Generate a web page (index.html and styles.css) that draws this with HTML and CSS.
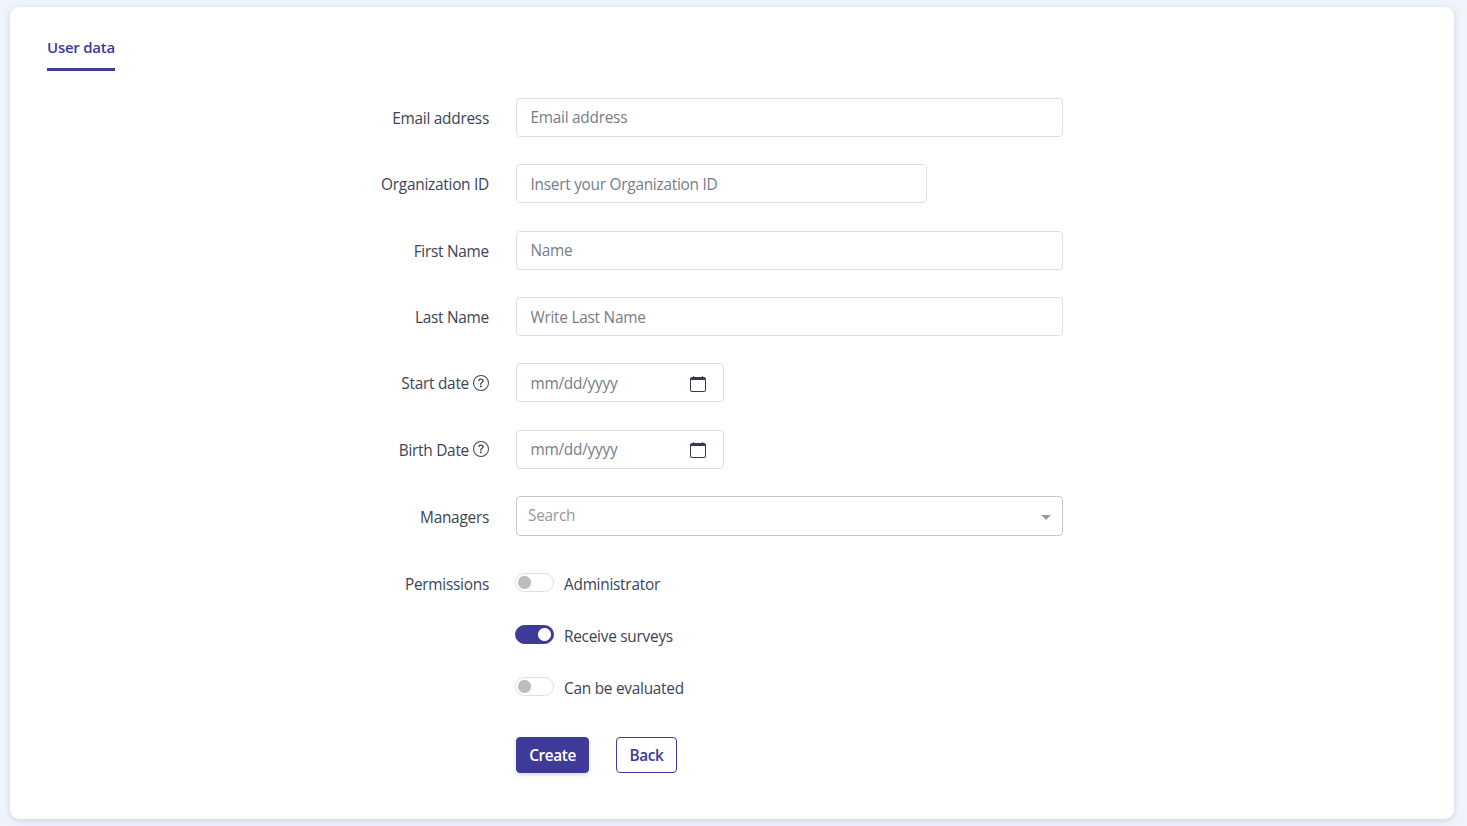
FILE: index.html
```html
<!DOCTYPE html>
<html lang="en">
<head>
  <meta charset="UTF-8">
  <meta name="viewport" content="width=device-width, initial-scale=1.0">
  <title>User data</title>
  <link rel="stylesheet" href="styles.css">
</head>
<body>
  <!-- Shared icons -->
  <svg class="sprite" aria-hidden="true">
    <symbol id="question" viewBox="0 0 16 16">
      <path d="M8 15A7 7 0 1 1 8 1a7 7 0 0 1 0 14zm0 1A8 8 0 1 0 8 0a8 8 0 0 0 0 16z"/>
      <path d="M5.255 5.786a.237.237 0 0 0 .241.247h.825c.138 0 .248-.113.266-.25.09-.656.54-1.134 1.342-1.134.686 0 1.314.343 1.314 1.168 0 .635-.374.927-.965 1.371-.673.489-1.206 1.06-1.168 1.987l.003.217a.25.25 0 0 0 .25.246h.811a.25.25 0 0 0 .25-.25v-.105c0-.718.273-.927 1.01-1.486.609-.463 1.244-.977 1.244-2.056 0-1.511-1.276-2.241-2.673-2.241-1.267 0-2.655.59-2.75 2.286zm1.557 5.763c0 .533.425.927 1.01.927.609 0 1.028-.394 1.028-.927 0-.552-.42-.94-1.029-.94-.584 0-1.009.388-1.009.94z"/>
    </symbol>
    <symbol id="calendar" viewBox="0 0 16 16">
      <path d="M3.5 0a.5.5 0 0 1 .5.5V1h8V.5a.5.5 0 0 1 1 0V1h1a2 2 0 0 1 2 2v11a2 2 0 0 1-2 2H2a2 2 0 0 1-2-2V3a2 2 0 0 1 2-2h1V.5a.5.5 0 0 1 .5-.5zM1 4v10a1 1 0 0 0 1 1h12a1 1 0 0 0 1-1V4H1z"/>
    </symbol>
  </svg>

  <div class="card">
    <div class="tabs">
      <a class="tab">User data</a>
    </div>

    <form class="user-form">
      <div class="form-row">
        <label for="email">Email address</label>
        <input class="form-control" id="email" type="text" placeholder="Email address">
      </div>
      <div class="form-row">
        <label for="organization">Organization ID</label>
        <input class="form-control medium" id="organization" type="text" placeholder="Insert your Organization ID">
      </div>
      <div class="form-row">
        <label for="firstName">First Name</label>
        <input class="form-control" id="firstName" type="text" placeholder="Name">
      </div>
      <div class="form-row">
        <label for="lastName">Last Name</label>
        <input class="form-control" id="lastName" type="text" placeholder="Write Last Name">
      </div>
      <div class="form-row">
        <label for="startDate">Start date <svg class="help"><use href="#question"/></svg></label>
        <div class="form-control date">
          <input id="startDate" type="text" placeholder="mm/dd/yyyy">
          <svg class="calendar"><use href="#calendar"/></svg>
        </div>
      </div>
      <div class="form-row">
        <label for="birthDate">Birth Date <svg class="help"><use href="#question"/></svg></label>
        <div class="form-control date">
          <input id="birthDate" type="text" placeholder="mm/dd/yyyy">
          <svg class="calendar"><use href="#calendar"/></svg>
        </div>
      </div>
      <div class="form-row">
        <label for="managers">Managers</label>
        <div class="form-control select">
          <input id="managers" type="text" placeholder="Search">
          <span class="arrow"></span>
        </div>
      </div>

      <!-- Permissions -->
      <div class="form-row permissions">
        <span class="label">Permissions</span>
        <div class="switches">
          <label class="switch"><input type="checkbox"><span>Administrator</span></label>
          <label class="switch"><input type="checkbox" checked><span>Receive surveys</span></label>
          <label class="switch"><input type="checkbox"><span>Can be evaluated</span></label>
        </div>
      </div>

      <div class="actions">
        <button class="btn primary" type="button">Create</button>
        <button class="btn outline" type="button">Back</button>
      </div>
    </form>
  </div>
</body>
</html>
```

FILE: styles.css
```css
* {
  box-sizing: border-box;
}

body {
  margin: 0;
  padding: 7px 13px 7px 10px;
  height: 100vh;
  background: #eff3fc;
  color: #3d4456;
  font-family: "Segoe UI", "Open Sans", "Noto Sans", sans-serif;
  font-size: 15.4px;
  letter-spacing: -0.26px;
  line-height: 24px;
  overflow: hidden;
}

.sprite {
  display: none;
}

.card {
  height: 812px;
  padding: 28px 37px;
  background: #fff;
  border-radius: 9px;
  box-shadow: 0 2px 6px rgba(60, 70, 110, 0.17);
}

.tabs {
  display: flex;
  height: 36px;
}

.tab {
  width: 68px;
  border-bottom: 3px solid #3d3a98;
  color: #3d3a98;
  font-size: 15px;
  font-weight: 600;
  letter-spacing: -0.25px;
  white-space: nowrap;
}

/* Form */
.user-form {
  width: 716px;
  margin: 26.8px 0 0 300px;
}

.form-row {
  display: grid;
  grid-template-columns: 142px 547px;
  column-gap: 27px;
  align-items: center;
  margin-bottom: 27.2px;
}

.form-row > label,
.label {
  display: flex;
  justify-content: flex-end;
  align-items: center;
  padding-top: 3px;
  white-space: nowrap;
}

.form-control {
  width: 100%;
  height: 39.2px;
  padding: 1px 13.5px 0;
  border: 1px solid #dee0e6;
  border-radius: 4px;
  background: #fff;
}

input {
  font: inherit;
  letter-spacing: inherit;
  color: inherit;
}

input::placeholder {
  color: #777d89;
  opacity: 1;
}

.medium {
  width: 411px;
}

.date,
.select {
  display: flex;
  align-items: center;
  justify-content: space-between;
}

.date {
  width: 208px;
  padding: 0 17px 0 13.5px;
}

.date input,
.select input {
  width: 140px;
  padding: 2px 0 0;
  border: 0;
  outline: 0;
}

.help {
  width: 16px;
  height: 16px;
  margin: 0 0 3px 4px;
  fill: currentColor;
}

.calendar {
  width: 16px;
  height: 16px;
  margin-top: 2px;
  fill: #343b4e;
}

.select {
  height: 40px;
  padding: 0 11px;
  border-color: #c8c8c8;
}

.select input {
  margin-bottom: 2px;
}

.select input::placeholder {
  color: #999;
}

.arrow {
  margin: 3px 0 0;
  border: 5px solid transparent;
  border-top-color: #999;
  border-bottom: 0;
}

/* Switches */
.permissions {
  align-items: start;
  margin: 34px 0 0;
}

.switches {
  display: flex;
  flex-direction: column;
  gap: 28px;
  padding-top: 2px;
}

.switch {
  display: flex;
  height: 24px;
}

.switch span {
  padding-top: 1px;
}

.switch input {
  appearance: none;
  width: 39px;
  height: 19px;
  margin: 1px 10px 0 -1px;
  border: 1px solid #dee0e6;
  border-radius: 10px;
  background: radial-gradient(circle at 8.5px 8.5px, #bdbdbd 6px, transparent 7px) #fff;
}

.switch input:checked {
  border-color: #3d3a98;
  background: radial-gradient(circle at 28.5px 8.5px, #fff 6px, transparent 7px) #3d3a98;
}

/* Buttons */
.actions {
  display: flex;
  gap: 27px;
  margin: 37px 0 0 169px;
}

.btn {
  height: 36px;
  padding: 2px 12px 0;
  border: 1px solid #3d3a98;
  border-radius: 4px;
  font: inherit;
  font-weight: 600;
  letter-spacing: -0.4px;
}

.primary {
  width: 73px;
  background: #3d3a98;
  color: #fff;
  box-shadow: 0 2px 4px rgba(0, 0, 0, 0.15);
}

.outline {
  width: 61px;
  background: #fff;
  color: #3d3a98;
}
```
